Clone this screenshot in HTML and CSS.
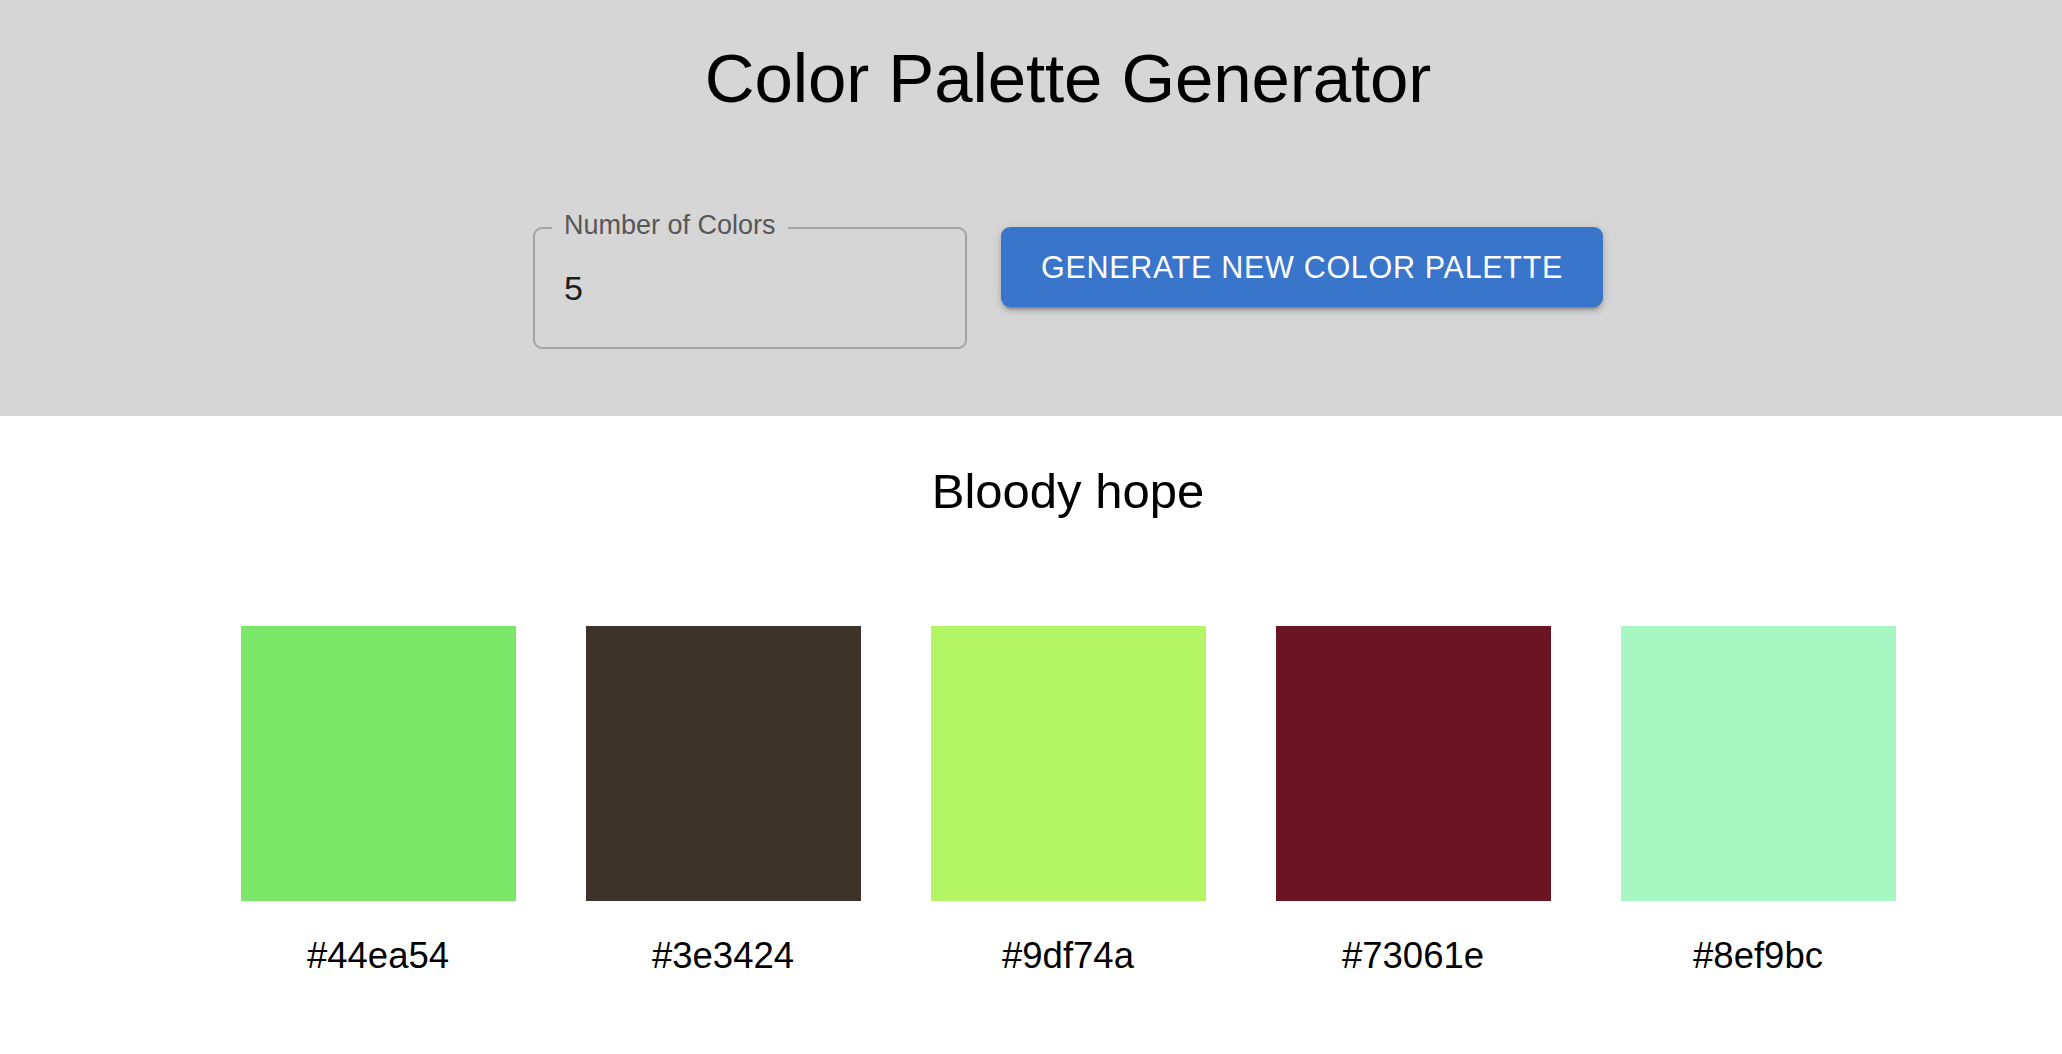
FILE: index.html
```html
<!DOCTYPE html>
<html lang="en">
<head>
<meta charset="utf-8">
<title>Color Palette Generator</title>
<link rel="stylesheet" href="styles.css">
</head>
<body>
  <header class="header">
    <h1 class="title">Color Palette Generator</h1>
    <div class="controls">
      <div class="field">
        <span class="field-label">Number of Colors</span>
        <input class="field-input" type="text" value="5">
      </div>
      <button class="btn" type="button">Generate New Color Palette</button>
    </div>
  </header>
  <main class="main">
    <h2 class="palette-name">Bloody hope</h2>
    <div class="swatches">
      <div class="swatch-col">
        <div class="swatch sw-1"></div>
        <div class="hex">#44ea54</div>
      </div>
      <div class="swatch-col">
        <div class="swatch sw-2"></div>
        <div class="hex">#3e3424</div>
      </div>
      <div class="swatch-col">
        <div class="swatch sw-3"></div>
        <div class="hex">#9df74a</div>
      </div>
      <div class="swatch-col">
        <div class="swatch sw-4"></div>
        <div class="hex">#73061e</div>
      </div>
      <div class="swatch-col">
        <div class="swatch sw-5"></div>
        <div class="hex">#8ef9bc</div>
      </div>
    </div>
  </main>
</body>
</html>
```
FILE: styles.css
```css
* { box-sizing: border-box; }

html, body {
  margin: 0;
  padding: 0;
  background: #ffffff;
  font-family: "Liberation Sans", Arial, Helvetica, sans-serif;
  color: #000;
}

.header {
  background: #d6d6d6;
  height: 416px;
  padding: 39px 0 0 74px;
  display: flex;
  flex-direction: column;
  align-items: center;
}

.title {
  margin: 0;
  font-size: 69px;
  line-height: 80px;
  font-weight: 400;
  letter-spacing: -0.1px;
}

.controls {
  margin-top: 108px;
  display: flex;
  align-items: flex-start;
  gap: 34px;
}

.field {
  position: relative;
  width: 434px;
  height: 122px;
  border: 2px solid #a3a3a3;
  border-radius: 9px;
  display: flex;
  align-items: center;
  padding-left: 29px;
}

.field-label {
  position: absolute;
  left: 17px;
  top: -19px;
  padding: 0 12px;
  background: #d6d6d6;
  font-size: 27px;
  line-height: 30px;
  color: #575757;
}

.field-input {
  border: none;
  outline: none;
  background: transparent;
  font-family: inherit;
  font-size: 34px;
  color: #1c1c1c;
  width: 100%;
  padding: 0;
  margin: 0;
}

.btn {
  height: 80px;
  padding: 0 40px;
  border: none;
  border-radius: 9px;
  background: #3a75cc;
  color: #ffffff;
  font-family: inherit;
  font-size: 30.5px;
  letter-spacing: 0.7px;
  text-transform: uppercase;
  box-shadow: 0 6px 2px -4px rgba(0,0,0,0.2), 0 4px 4px 0 rgba(0,0,0,0.14), 0 2px 11px 0 rgba(0,0,0,0.12);
  cursor: pointer;
}

.main {
  padding: 45px 0 0 74px;
  display: flex;
  flex-direction: column;
  align-items: center;
}

.palette-name {
  margin: 0;
  font-size: 49px;
  line-height: 60px;
  font-weight: 400;
}

.swatches {
  margin-top: 105px;
  display: flex;
  gap: 70px;
}

.swatch-col {
  display: flex;
  flex-direction: column;
  align-items: center;
}

.swatch {
  width: 275px;
  height: 275px;
}

.sw-1 { background: #7ce86a; }
.sw-2 { background: #3d3328; }
.sw-3 { background: #b3f564; }
.sw-4 { background: #6a1521; }
.sw-5 { background: #a8f7c3; }

.hex {
  margin-top: 34px;
  font-size: 36.5px;
  line-height: 42px;
}
```
